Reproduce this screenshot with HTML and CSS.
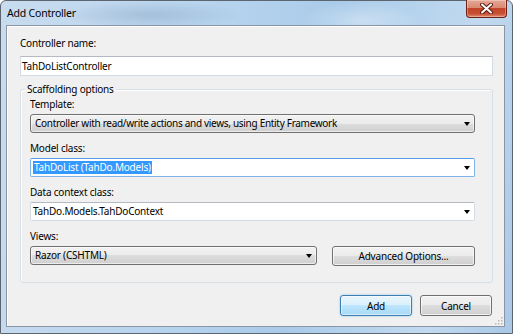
FILE: index.html
```html
<!DOCTYPE html>
<html lang="en">
<head>
    <meta charset="UTF-8">
    <title>Add Controller</title>
    <link rel="stylesheet" href="styles.css">
</head>
<body>
    <div class="window">
        <div class="titlebar">
            <span class="title">Add Controller</span>
            <span class="close">
                <svg width="15" height="11" viewBox="0 0 15 11">
                    <path d="M3 1.5 L12 9.5 M12 1.5 L3 9.5" stroke="#5a1a12" stroke-width="4" stroke-linecap="round"/>
                    <path d="M3 1.5 L12 9.5 M12 1.5 L3 9.5" stroke="#fff" stroke-width="2" stroke-linecap="round"/>
                </svg>
            </span>
        </div>
        <div class="client">
            <div class="lbl">Controller name:</div>
            <div class="textbox">TahDoListController</div>

            <fieldset class="group">
                <legend>Scaffolding options</legend>

                <div class="field">
                    <div class="lbl">Template:</div>
                    <div class="combo list template"><span>Controller with read/write actions and views, using Entity Framework</span><i class="arrow"></i></div>
                </div>

                <div class="field">
                    <div class="lbl">Model class:</div>
                    <div class="combo edit focus"><span class="selected">TahDoList (TahDo.Models)</span><i class="arrow"></i></div>
                </div>

                <div class="field">
                    <div class="lbl">Data context class:</div>
                    <div class="combo edit"><span>TahDo.Models.TahDoContext</span><i class="arrow"></i></div>
                </div>

                <div class="field">
                    <div class="lbl">Views:</div>
                    <div class="row">
                        <div class="combo list views"><span>Razor (CSHTML)</span><i class="arrow"></i></div>
                        <button class="btn advanced">Advanced Options...</button>
                    </div>
                </div>
            </fieldset>

            <div class="actions">
                <button class="btn default">Add</button>
                <button class="btn">Cancel</button>
            </div>

            <svg class="grip" width="8" height="8" viewBox="0 0 8 8">
                <rect x="6" y="0" width="1.5" height="1.5" fill="#b9b9b9"/>
                <rect x="3" y="3" width="1.5" height="1.5" fill="#b9b9b9"/>
                <rect x="6" y="3" width="1.5" height="1.5" fill="#b9b9b9"/>
                <rect x="0" y="6" width="1.5" height="1.5" fill="#b9b9b9"/>
                <rect x="3" y="6" width="1.5" height="1.5" fill="#b9b9b9"/>
                <rect x="6" y="6" width="1.5" height="1.5" fill="#b9b9b9"/>
            </svg>
        </div>
    </div>
</body>
</html>
```

FILE: styles.css
```css
body {
    margin: 0;
    font-family: 'Noto Sans', 'Open Sans', sans-serif;
    font-size: 10px;
    letter-spacing: -0.2px;
    color: #000;
}
.window {
    width: 513px;
    height: 334px;
    box-sizing: border-box;
    display: flex;
    flex-direction: column;
    padding: 0 7px 6px 5px;
    border: 1px solid #5d6670;
    border-radius: 6px 6px 0 0;
    background:
        radial-gradient(ellipse 90px 14px at 150px 14px, rgba(120, 150, 180, 0.35), transparent),
        radial-gradient(ellipse 60px 20px at 360px 20px, rgba(255, 255, 255, 0.35), transparent),
        linear-gradient(100deg, #c9dcef 0%, #b6d3ee 40%, #a9cbe9 60%, #c2daf0 85%, #a9c8e6 100%);
}
.titlebar {
    height: 24px;
    display: flex;
    align-items: flex-start;
}
.title {
    padding: 5px 0 0 1px;
    line-height: 15px;
    font-size: 10.5px;
}
.close {
    margin: -1px -2px 0 auto;
    width: 41px;
    height: 18px;
    box-sizing: border-box;
    display: flex;
    align-items: center;
    justify-content: center;
    border: 1px solid #6b2219;
    border-top: none;
    border-radius: 0 0 4px 4px;
    background: linear-gradient(#e7a794 0%, #d98a73 45%, #c2442a 50%, #c94f33 80%, #e08a6a 100%);
    box-shadow: inset 0 0 0 1px rgba(255, 255, 255, 0.3);
}
.client {
    flex: 1;
    position: relative;
    display: flex;
    flex-direction: column;
    padding: 10px 11px 0 13px;
    background: #f0f0f0;
    border: 1px solid #8a96a4;
    box-shadow: inset 1px 1px 0 #fff;
}
.lbl {
    line-height: 15px;
}
.textbox {
    margin-top: 5px;
    height: 20px;
    box-sizing: border-box;
    padding: 0 1px;
    line-height: 18px;
    background: #fff;
    border: 1px solid #d5dbe3;
    border-top-color: #b5bac2;
}
.group {
    margin: 6px 0 0;
    padding: 0 17px 16px 9px;
    border: 1px solid #d5dfe5;
    border-radius: 3px;
    box-shadow: inset 1px 1px 0 #fff;
}
.group legend {
    margin-left: -5px;
    padding: 0 2px;
    line-height: 15px;
}
.field + .field {
    margin-top: 8px;
}
.combo {
    margin-top: 2px;
    height: 19px;
    box-sizing: border-box;
    display: flex;
    align-items: center;
    padding: 0 4px 0 4px;
    border-radius: 3px;
}
.combo span {
    flex: 1;
    line-height: 15px;
}
.template span {
    letter-spacing: -0.3px;
}
.list {
    border: 1px solid #707070;
    background: linear-gradient(#f2f2f2 0%, #ebebeb 50%, #dddddd 50%, #cfcfcf 100%);
    box-shadow: inset 0 0 0 1px rgba(255, 255, 255, 0.6);
}
.edit {
    border-radius: 2px;
    padding-left: 2px;
    background: #fff;
    border: 1px solid #d5dbe3;
    border-top-color: #b5bac2;
}
.edit.focus {
    border-color: #7eb4ea;
    border-top-color: #569de5;
}
.combo .selected {
    flex: 0 0 auto;
    background: #3399ff;
    color: #fff;
    padding: 0 1px;
    line-height: 13px;
}
.arrow {
    width: 0;
    height: 0;
    border-left: 3.5px solid transparent;
    border-right: 3.5px solid transparent;
    border-top: 4px solid #000;
    margin-left: auto;
}
.row {
    display: flex;
    gap: 15px;
}
.views {
    flex: 1;
}
.btn {
    height: 21px;
    box-sizing: border-box;
    font: inherit;
    letter-spacing: inherit;
    color: #000;
    padding: 0;
    border: 1px solid #707070;
    border-radius: 3px;
    background: linear-gradient(#f2f2f2 0%, #ebebeb 50%, #dddddd 50%, #cfcfcf 100%);
    box-shadow: inset 0 0 0 1px rgba(255, 255, 255, 0.7);
}
.advanced {
    width: 143px;
    margin-top: 2px;
    height: 20px;
}
.actions {
    display: flex;
    justify-content: flex-end;
    gap: 8px;
    margin-top: 12px;
    padding-right: 1px;
}
.actions .btn {
    width: 72px;
}
.btn.default {
    border-color: #3c7fb1;
    background: linear-gradient(#eaf6fd 0%, #d9f0fc 50%, #bee6fd 50%, #a7d9f5 100%);
    box-shadow: inset 0 0 0 1px rgba(255, 255, 255, 0.5), 0 0 2px #7fc4ec;
}
.grip {
    position: absolute;
    right: 1px;
    bottom: 1px;
}
```
